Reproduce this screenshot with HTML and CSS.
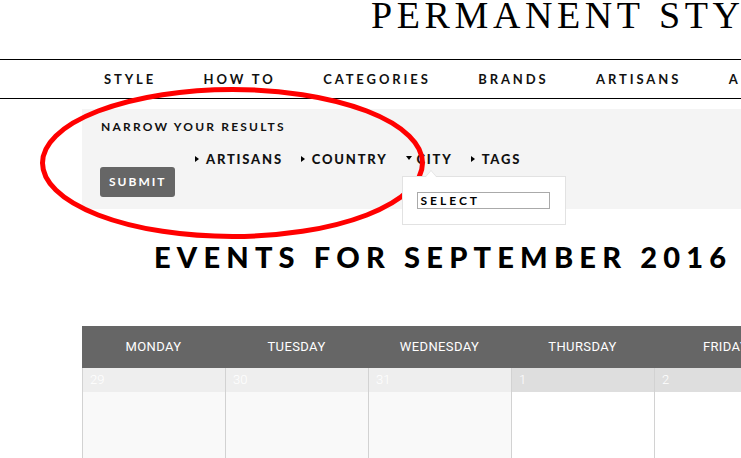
FILE: index.html
```html
<!DOCTYPE html>
<html lang="en">
<head>
<meta charset="utf-8">
<title>Permanent Style – Events</title>
<link rel="stylesheet" href="styles.css">
</head>
<body>
<div class="page">
  <header class="masthead">
    <div class="logo">PERMANENT STYLE</div>
  </header>
  <nav class="mainnav">
    <a>STYLE</a>
    <a>HOW TO</a>
    <a>CATEGORIES</a>
    <a>BRANDS</a>
    <a>ARTISANS</a>
    <a>ABOUT</a>
  </nav>
  <main class="container">
    <section class="filters">
      <h3 class="filters-title">NARROW YOUR RESULTS</h3>
      <div class="filters-row">
        <button class="submit">SUBMIT</button>
        <ul class="tabs">
          <li class="tab"><span class="arrow-right"></span>ARTISANS</li>
          <li class="tab"><span class="arrow-right"></span>COUNTRY</li>
          <li class="tab open"><span class="arrow-down"></span>CITY
            <div class="popup">
              <div class="select">SELECT</div>
            </div>
          </li>
          <li class="tab"><span class="arrow-right"></span>TAGS</li>
        </ul>
      </div>
    </section>
    <h1 class="events-title">EVENTS FOR SEPTEMBER 2016</h1>
    <div class="calendar">
      <div class="dayname">MONDAY</div>
      <div class="dayname">TUESDAY</div>
      <div class="dayname">WEDNESDAY</div>
      <div class="dayname">THURSDAY</div>
      <div class="dayname">FRIDAY</div>
      <div class="dayname">SATURDAY</div>
      <div class="dayname">SUNDAY</div>

      <div class="date prev">29</div>
      <div class="date prev">30</div>
      <div class="date prev">31</div>
      <div class="date">1</div>
      <div class="date">2</div>
      <div class="date">3</div>
      <div class="date">4</div>

      <div class="cell prev"></div>
      <div class="cell prev"></div>
      <div class="cell prev"></div>
      <div class="cell"></div>
      <div class="cell"></div>
      <div class="cell"></div>
      <div class="cell"></div>
    </div>
  </main>
  <svg class="annotation" width="460" height="200" viewBox="0 0 460 200" aria-hidden="true">
    <ellipse cx="232.5" cy="81" rx="190" ry="73.5" fill="none" stroke="#ff0000" stroke-width="5"/>
  </svg>
</div>
</body>
</html>
```
FILE: styles.css
```css
html, body {
  margin: 0;
  padding: 0;
  background: #fff;
  overflow: hidden;
}
.page {
  position: relative;
  width: 1165px;
  font-family: "Lato", "Liberation Sans", sans-serif;
  color: #111;
}
.masthead {
  height: 59px;
  padding-left: 371px;
  box-sizing: border-box;
}
.logo {
  font-family: "Liberation Serif", "DejaVu Serif", serif;
  font-size: 38px;
  line-height: 30px;
  letter-spacing: 4.6px;
  word-spacing: 1px;
  color: #000;
  white-space: nowrap;
}
.mainnav {
  display: flex;
  gap: 47.5px;
  padding-left: 104px;
  height: 38px;
  border-top: 1px solid #000;
  border-bottom: 1px solid #000;
  font-size: 13px;
  font-weight: 700;
  letter-spacing: 2.9px;
  line-height: 38px;
  white-space: nowrap;
}
.mainnav a {
  color: #111;
}
.container {
  margin-left: 82px;
  width: 1001px;
}
.filters {
  position: relative;
  margin-top: 10px;
  height: 100px;
  box-sizing: border-box;
  padding: 10px 18px 0;
  background: #f4f4f4;
}
.filters-title {
  margin: 0;
  padding-left: 1px;
  font-size: 12px;
  line-height: 16px;
  font-weight: 700;
  letter-spacing: 2.2px;
  color: #111;
}
.filters-row {
  display: flex;
  align-items: flex-start;
  gap: 20px;
  margin-top: 14px;
}
.submit {
  margin-top: 18px;
  width: 75px;
  height: 30px;
  padding: 0 0 0 9px;
  border: 0;
  border-radius: 3px;
  background: #666;
  color: #fff;
  font-family: "Lato", "Liberation Sans", sans-serif;
  font-size: 12px;
  font-weight: 700;
  letter-spacing: 2px;
  text-align: left;
  line-height: 30px;
}
.tabs {
  display: flex;
  gap: 18px;
  margin: 0;
  padding: 0;
  list-style: none;
}
.tab {
  position: relative;
  display: flex;
  align-items: center;
  font-size: 13px;
  font-weight: 900;
  letter-spacing: 1.8px;
  line-height: 20px;
  color: #111;
  white-space: nowrap;
}
.arrow-right {
  width: 0;
  height: 0;
  margin-right: 7px;
  border-top: 3px solid transparent;
  border-bottom: 3px solid transparent;
  border-left: 4px solid #000;
}
.arrow-down {
  width: 0;
  height: 0;
  margin-right: 5px;
  margin-top: -3px;
  border-left: 3px solid transparent;
  border-right: 3px solid transparent;
  border-top: 4px solid #000;
}
.popup {
  position: absolute;
  left: -4px;
  top: 27px;
  width: 164px;
  height: 49px;
  box-sizing: border-box;
  padding: 15px 0 0 14px;
  background: #fff;
  border: 1px solid #e2e2e2;
  z-index: 2;
}
.popup::before,
.popup::after {
  content: "";
  position: absolute;
  left: 22px;
  width: 0;
  height: 0;
  border-left: 6px solid transparent;
  border-right: 6px solid transparent;
}
.popup::before {
  top: -7px;
  border-bottom: 7px solid #e2e2e2;
}
.popup::after {
  top: -6px;
  border-bottom: 7px solid #fff;
}
.select {
  width: 133px;
  height: 17px;
  box-sizing: border-box;
  border: 1px solid #aaa;
  padding-left: 3px;
  font-size: 12px;
  font-weight: 700;
  letter-spacing: 3px;
  line-height: 15px;
  color: #000;
  background: #fff;
}
.events-title {
  margin: 30px 0 0;
  padding-left: 72px;
  font-size: 29px;
  line-height: 36px;
  font-weight: 900;
  letter-spacing: 6.2px;
  color: #000;
  white-space: nowrap;
}
.calendar {
  display: grid;
  grid-template-columns: repeat(7, 143px);
  grid-template-rows: 42px 24px 100px;
  margin-top: 51px;
}
.dayname {
  background: #666;
  color: #fff;
  text-align: center;
  font-family: "Roboto", "Liberation Sans", sans-serif;
  font-size: 13px;
  font-weight: 400;
  letter-spacing: 0.4px;
  line-height: 42px;
}
.date {
  box-sizing: border-box;
  border-left: 1px solid #d2d2d2;
  background: #dedede;
  color: #fff;
  font-family: "Roboto", "Liberation Sans", sans-serif;
  font-size: 13px;
  font-weight: 300;
  line-height: 24px;
  padding-left: 7px;
}
.date.prev {
  background: #eeeeee;
}
.cell {
  box-sizing: border-box;
  border-left: 1px solid #d2d2d2;
  background: #fff;
}
.cell.prev {
  background: #f9f9f9;
}
.annotation {
  position: absolute;
  left: 0;
  top: 82px;
  pointer-events: none;
}
```
